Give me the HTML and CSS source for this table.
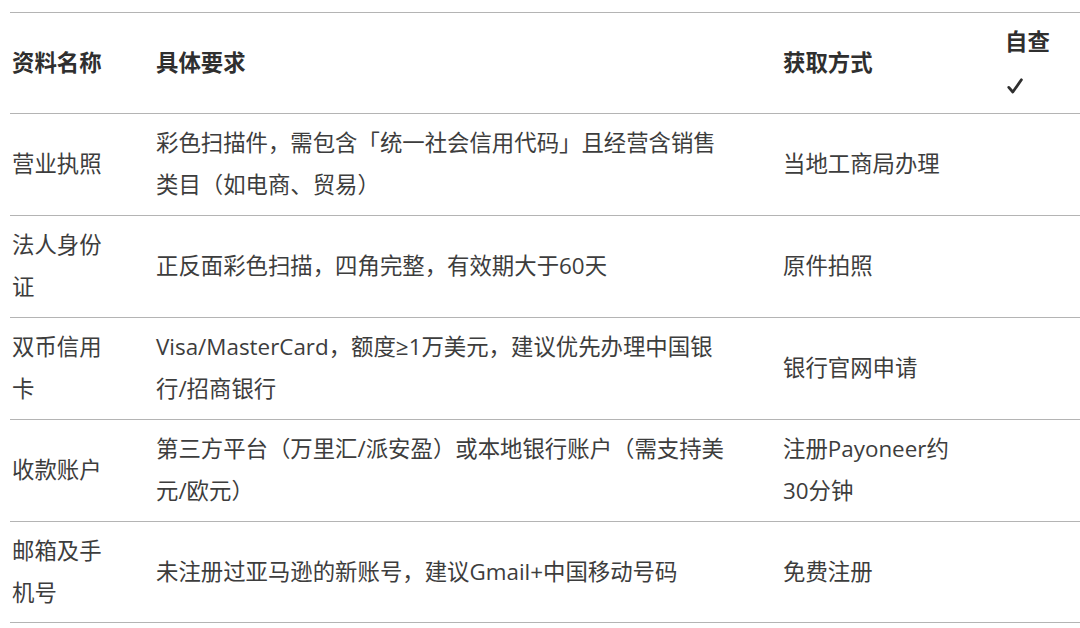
FILE: index.html
```html
<!DOCTYPE html>
<html lang="zh-CN">
<head>
<meta charset="utf-8">
<link rel="stylesheet" href="styles.css">
</head>
<body>
<div class="wrap">
<table class="req">
<colgroup>
<col class="c1"><col class="c2"><col class="c3"><col class="c4">
</colgroup>
<thead>
<tr><th>资料名称</th><th>具体要求</th><th>获取方式</th><th>自查 <svg class="tick" width="16" height="16" viewBox="0 0 16 16" aria-label="✓"><path d="M1.8 9.4 L5.8 14 L14.4 1.8" fill="none" stroke="#2f2f2f" stroke-width="2.8" stroke-linecap="round" stroke-linejoin="round"/></svg></th></tr>
</thead>
<tbody>
<tr><td>营业执照</td><td>彩色扫描件，需包含「统一社会信用代码」且经营含销售类目（如电商、贸易）</td><td>当地工商局办理</td><td></td></tr>
<tr><td>法人身份证</td><td>正反面彩色扫描，四角完整，有效期大于60天</td><td>原件拍照</td><td></td></tr>
<tr><td>双币信用卡</td><td>Visa/MasterCard，额度≥1万美元，建议优先办理中国银行/招商银行</td><td>银行官网申请</td><td></td></tr>
<tr><td>收款账户</td><td>第三方平台（万里汇/派安盈）或本地银行账户（需支持美元/欧元）</td><td>注册Payoneer约30分钟</td><td></td></tr>
<tr><td>邮箱及手机号</td><td>未注册过亚马逊的新账号，建议Gmail+中国移动号码</td><td>免费注册</td><td></td></tr>
</tbody>
</table>
</div>
</body>
</html>
```
FILE: styles.css
```css
html, body {
  margin: 0;
  padding: 0;
  background: #ffffff;
  overflow: hidden;
}
.wrap {
  padding: 12px 0 0 10px;
  width: 1080px;
}
.req {
  border-collapse: collapse;
  table-layout: fixed;
  width: 1090px;
  font-family: "Open Sans", "Noto Sans CJK SC", sans-serif;
  font-size: 22.4px;
  line-height: 42px;
  color: #3d3d3d;
}
.c1 { width: 144px; }
.c2 { width: 627px; }
.c3 { width: 222px; }
.c4 { width: 97px; }
.req th, .req td {
  text-align: left;
  vertical-align: middle;
  padding: 8px 44px 8px 2px;
  border-top: 1px solid #b4b4b4;
  border-bottom: 1px solid #b4b4b4;
  height: 84.9px;
  word-break: break-all;
}
.req th {
  height: 83px;
  font-weight: 700;
  color: #2f2f2f;
}
.req th:first-child, .req td:first-child { padding-right: 40px; }
.req th:last-child, .req td:last-child { padding-right: 40px; }
.tick {
  display: inline-block;
  vertical-align: middle;
  margin-left: 2px;
}
```
